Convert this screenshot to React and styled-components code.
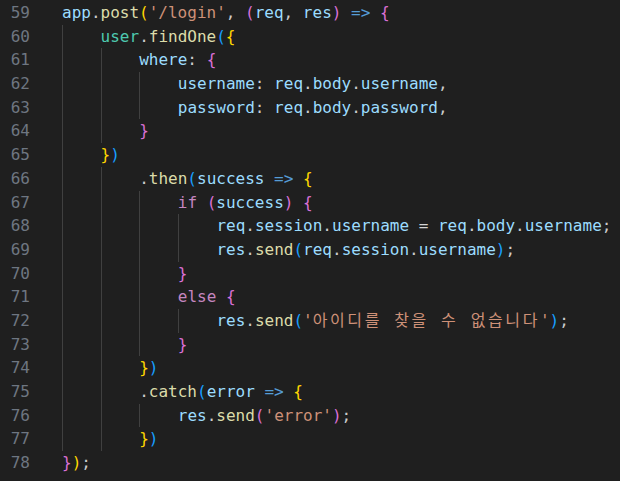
import styled, { createGlobalStyle } from "styled-components";

const GlobalStyle = createGlobalStyle`
  html, body {
    margin: 0;
    padding: 0;
    background: #1f1f1f;
  }
`;

const C = {
  v: "#9cdcfe",
  f: "#dcdcaa",
  s: "#ce9178",
  k: "#569cd6",
  c: "#c586c0",
  t: "#4ec9b0",
  p: "#cccccc",
  o: "#d4d4d4",
  b1: "#ffd700",
  b2: "#da70d6",
  b3: "#179fff",
};

const Editor = styled.div`
  width: 620px;
  height: 481px;
  box-sizing: border-box;
  padding-top: 1px;
  background: #1f1f1f;
  display: flex;
  flex-direction: column;
  overflow: hidden;
  font-family: "DejaVu Sans Mono", "Noto Sans CJK KR", monospace;
  font-size: 16px;
`;

const Row = styled.div`
  display: flex;
  height: 23.7px;
  line-height: 23.7px;
  flex-shrink: 0;
`;

const LineNo = styled.div`
  width: 30px;
  text-align: right;
  color: #6e7681;
  flex-shrink: 0;
`;

const Code = styled.div`
  display: flex;
  margin-left: 32px;
  white-space: pre;
`;

const Guide = styled.span`
  width: 38.6px;
  flex-shrink: 0;
  box-sizing: border-box;
  border-left: 1px solid #404040;
`;

const Tok = styled.span`
  color: ${(p) => C[p.$c] || C.p};
`;

const Hangul = styled.span`
  letter-spacing: 2.6px;
`;

// [indent, [text, colour]...]
const lines = [
  [0, [["app", "v"], ["."], ["post", "f"], ["(", "b1"], ["'/login'", "s"], [", "], ["(", "b2"], ["req", "v"], [", "], ["res", "v"], [")", "b2"], [" "], ["=>", "k"], [" "], ["{", "b2"]]],
  [1, [["user", "t"], ["."], ["findOne", "f"], ["(", "b3"], ["{", "b1"]]],
  [2, [["where", "v"], [": "], ["{", "b2"]]],
  [3, [["username", "v"], [": "], ["req", "v"], ["."], ["body", "v"], ["."], ["username", "v"], [","]]],
  [3, [["password", "v"], [": "], ["req", "v"], ["."], ["body", "v"], ["."], ["password", "v"], [","]]],
  [2, [["}", "b2"]]],
  [1, [["}", "b1"], [")", "b3"]]],
  [2, [["."], ["then", "f"], ["(", "b3"], ["success", "v"], [" "], ["=>", "k"], [" "], ["{", "b1"]]],
  [3, [["if", "c"], [" "], ["(", "b2"], ["success", "v"], [")", "b2"], [" "], ["{", "b2"]]],
  [4, [["req", "v"], ["."], ["session", "v"], ["."], ["username", "v"], [" "], ["=", "o"], [" "], ["req", "v"], ["."], ["body", "v"], ["."], ["username", "v"], [";"]]],
  [4, [["res", "v"], ["."], ["send", "f"], ["(", "b3"], ["req", "v"], ["."], ["session", "v"], ["."], ["username", "v"], [")", "b3"], [";"]]],
  [3, [["}", "b2"]]],
  [3, [["else", "c"], [" "], ["{", "b2"]]],
  [4, [["res", "v"], ["."], ["send", "f"], ["(", "b3"], ["'", "s"], ["아이디를 찾을 수 없습니다", "s", true], ["'", "s"], [")", "b3"], [";"]]],
  [3, [["}", "b2"]]],
  [2, [["}", "b1"], [")", "b3"]]],
  [2, [["."], ["catch", "f"], ["(", "b3"], ["error", "v"], [" "], ["=>", "k"], [" "], ["{", "b1"]]],
  [3, [["res", "v"], ["."], ["send", "f"], ["(", "b2"], ["'error'", "s"], [")", "b2"], [";"]]],
  [2, [["}", "b1"], [")", "b3"]]],
  [0, [["}", "b2"], [")", "b1"], [";"]]],
];

export default function App() {
  return (
    <>
      <GlobalStyle />
      <Editor>
        {lines.map(([indent, toks], i) => (
          <Row key={i}>
            <LineNo>{59 + i}</LineNo>
            <Code>
              {Array.from({ length: indent }).map((_, j) => (
                <Guide key={j} />
              ))}
              <span>
                {toks.map(([text, c, wide], j) => (
                  <Tok key={j} $c={c}>
                    {wide ? <Hangul>{text}</Hangul> : text}
                  </Tok>
                ))}
              </span>
            </Code>
          </Row>
        ))}
      </Editor>
    </>
  );
}
